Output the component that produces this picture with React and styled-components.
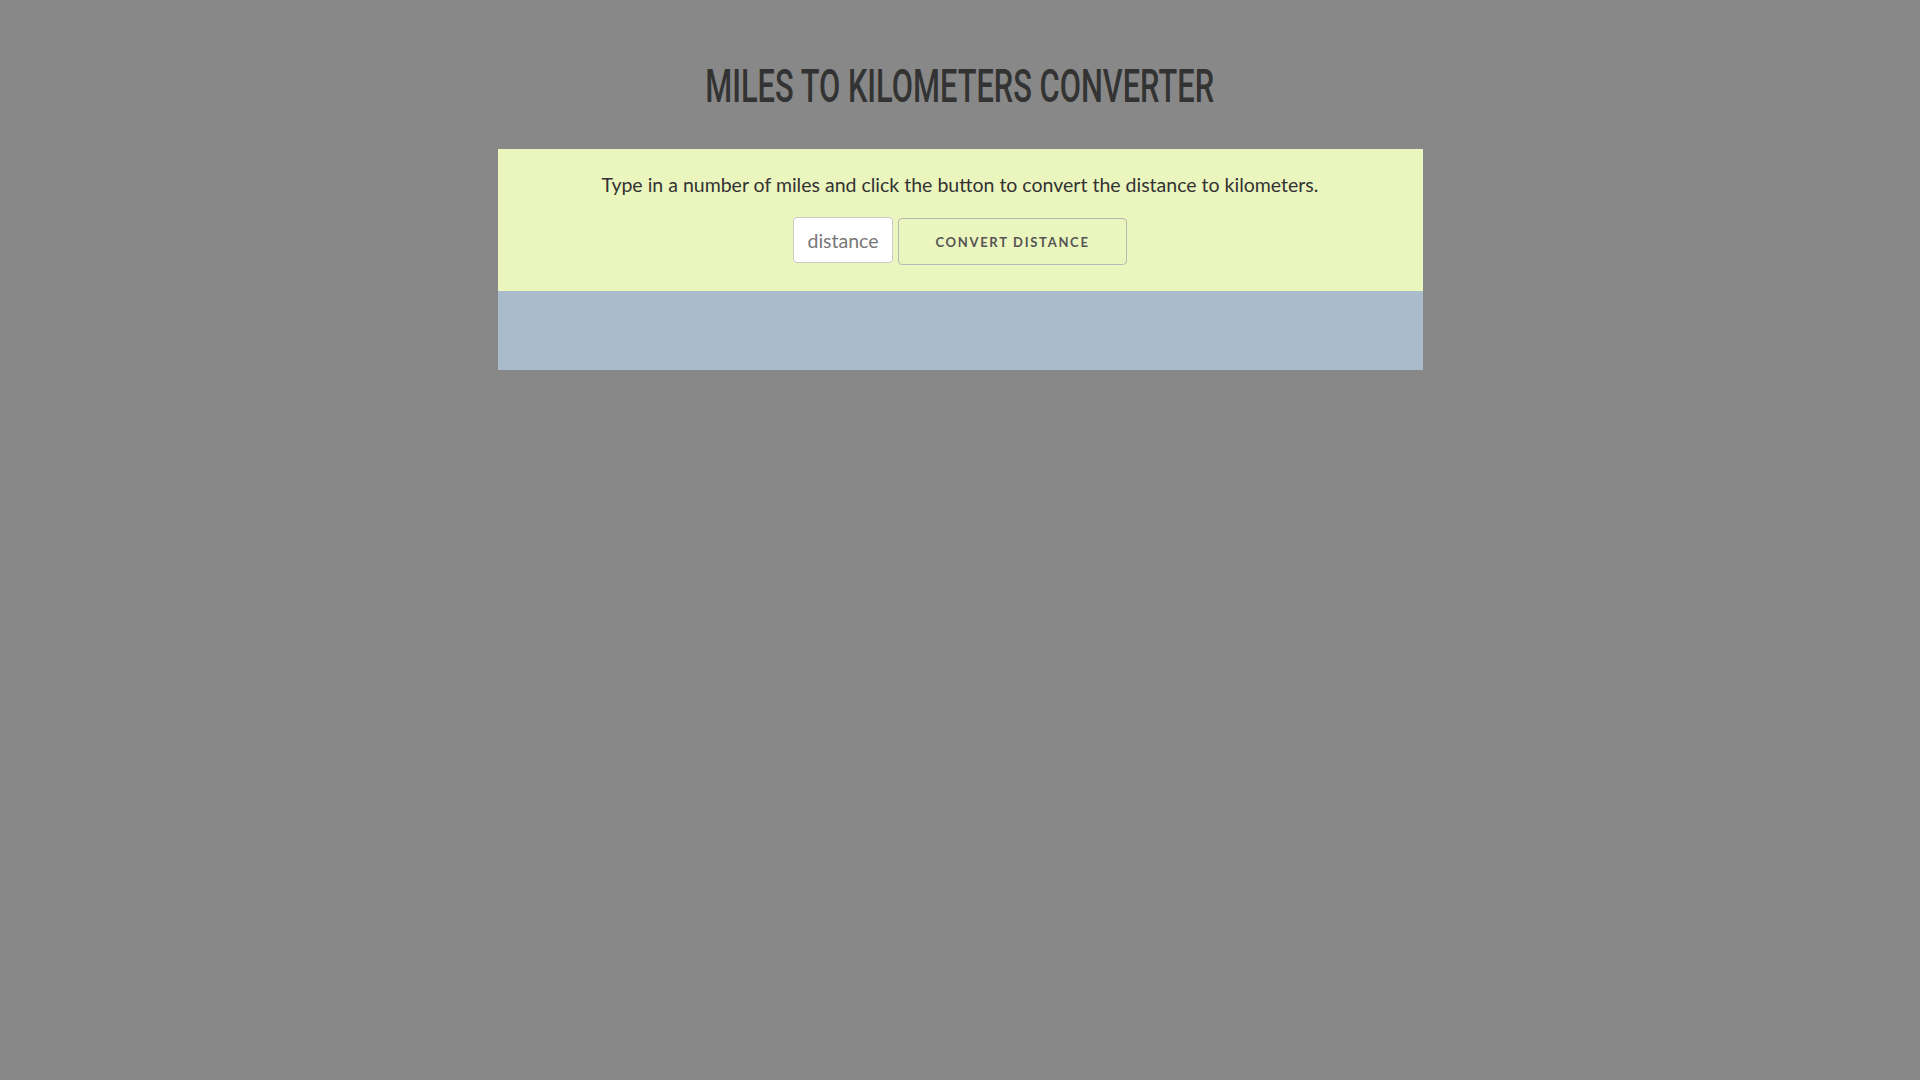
import React from "react";
import styled, { createGlobalStyle } from "styled-components";

const Global = createGlobalStyle`
  html, body { margin: 0; padding: 0; }
  body { background: #888888; font-family: "Lato", "Open Sans", sans-serif; min-height: 1080px; }
`;

const Page = styled.div`
  display: flex;
  flex-direction: column;
  align-items: center;
  padding-top: 62px;
`;

const Title = styled.h1`
  margin: 0 0 39px;
  font-family: "Roboto", "DejaVu Sans", sans-serif;
  font-weight: 500;
  font-size: 46px;
  line-height: 48px;
  color: #333333;
  text-transform: uppercase;
  white-space: nowrap;
  transform: scaleX(0.67);
`;

const Panel = styled.div`
  width: 925px;
  display: flex;
  flex-direction: column;
`;

const Top = styled.section`
  background: #ebf5be;
  height: 142px;
  box-sizing: border-box;
  padding-top: 23px;
  display: flex;
  flex-direction: column;
  align-items: center;
`;

const Bottom = styled.section`
  background: #aabbcc;
  height: 79px;
`;

const Intro = styled.p`
  margin: 0 0 19px;
  font-size: 19.5px;
  line-height: 26px;
  color: #333333;
`;

const Row = styled.div`
  display: flex;
  align-items: flex-start;
  gap: 5px;
`;

const Input = styled.input`
  width: 100px;
  height: 46px;
  box-sizing: border-box;
  border: 1px solid #cccccc;
  border-radius: 4px;
  background: #ffffff;
  font-family: inherit;
  font-size: 19.5px;
  text-align: center;
  padding: 0 8px;
  color: #333;
  &::placeholder { color: #777777; }
`;

const Button = styled.button`
  width: 229px;
  height: 47px;
  margin-top: 1px;
  box-sizing: border-box;
  border: 1px solid #b8b8b8;
  border-radius: 4px;
  background: transparent;
  font-family: inherit;
  font-weight: 700;
  font-size: 13px;
  letter-spacing: 1.7px;
  color: #555555;
  text-transform: uppercase;
`;

export default function App() {
  return (
    <>
      <Global />
      <Page>
        <Title>Miles to Kilometers Converter</Title>
        <Panel>
          <Top>
            <Intro>Type in a number of miles and click the button to convert the distance to kilometers.</Intro>
            <Row>
              <Input placeholder="distance" />
              <Button>Convert Distance</Button>
            </Row>
          </Top>
          <Bottom />
        </Panel>
      </Page>
    </>
  );
}
